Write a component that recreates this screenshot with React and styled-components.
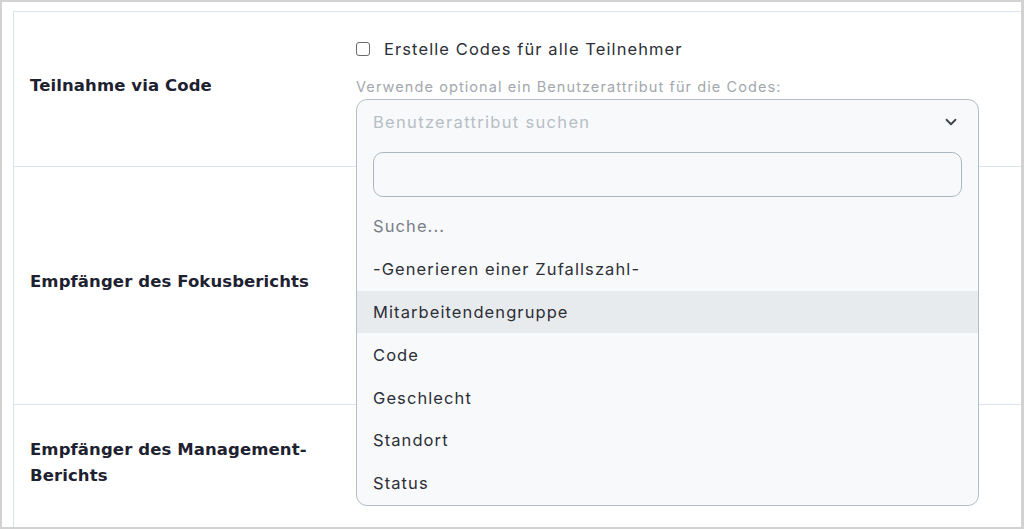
import React from 'react';
import styled, { createGlobalStyle } from 'styled-components';
import { ChevronDown } from 'lucide-react';

const GlobalStyle = createGlobalStyle`
  html, body {
    margin: 0;
    padding: 0;
    background: #ffffff;
  }
  body {
    font-family: Inter, "Noto Sans", sans-serif;
    letter-spacing: 0.068em;
    -webkit-font-smoothing: antialiased;
  }
`

const Frame = styled.div`
  box-sizing: border-box;
  width: 1024px;
  height: 529px;
  border: 2px solid #d2d2d2;
  border-right-width: 3px;
  padding: 9px 0 0 11px;
  overflow: hidden;
  background: #ffffff;
`

const Table = styled.div`
  border-top: 1px solid #dde3ea;
  border-left: 1px solid #dde3ea;
`

const Row = styled.div`
  display: grid;
  grid-template-columns: 342px 1fr;
  height: ${p => p.height}px;
  border-bottom: 1px solid #dde3ea;
`

const Label = styled.div`
  display: flex;
  align-items: center;
  padding: 0 26px 7px 16px;
  font-family: "DejaVu Sans", Inter, sans-serif;
  font-size: 16.5px;
  font-weight: 700;
  letter-spacing: 0.1px;
  line-height: 26px;
  color: #1d2130;
`

const Value = styled.div`
  padding: 25px 42px 0 0;
  display: flex;
  flex-direction: column;
`

const CheckLine = styled.label`
  display: flex;
  align-items: center;
  gap: 14px;
  height: 24px;
  font-size: 16.5px;
  color: #2c2f36;
`

const Box = styled.span`
  box-sizing: border-box;
  width: 14px;
  height: 14px;
  border: 1.5px solid #6b6b6b;
  border-radius: 3px;
  background: #ffffff;
`

const Hint = styled.div`
  margin-top: 16px;
  height: 20px;
  line-height: 20px;
  font-size: 14.5px;
  color: #a3a7ad;
`

const SelectWrap = styled.div`
  position: relative;
  margin-top: 2px;
  height: 44px;
`

const Menu = styled.div`
  position: absolute;
  top: 0;
  left: 0;
  right: 0;
  z-index: 5;
  border: 1px solid #b3bec8;
  border-radius: 11px;
  background: #f8f9fb;
  overflow: hidden;
`

const Control = styled.div`
  display: flex;
  align-items: center;
  justify-content: space-between;
  height: 44px;
  padding: 0 18px 0 16px;
  font-size: 16.5px;
  letter-spacing: 0.08em;
  color: #b6bec6;
`

const SearchBox = styled.div`
  box-sizing: border-box;
  margin: 8px 16px;
  height: 45px;
  border: 1.5px solid #aab6c0;
  border-radius: 10px;
  background: #f8f9fb;
`

const Option = styled.div`
  display: flex;
  align-items: center;
  height: 42.8px;
  padding-left: 16px;
  font-size: 16.5px;
  color: ${p => (p.muted ? '#7a7f86' : '#2c2f36')};
  background: ${p => (p.active ? '#e8ebee' : 'transparent')};
`

const options = [
  { text: 'Suche...', muted: true },
  { text: '-Generieren einer Zufallszahl-' },
  { text: 'Mitarbeitendengruppe', active: true },
  { text: 'Code' },
  { text: 'Geschlecht' },
  { text: 'Standort' },
  { text: 'Status' },
]

const App = () => (
  <>
    <GlobalStyle />
    <Frame>
      <Table>
        <Row height={154}>
          <Label>Teilnahme via Code</Label>
          <Value>
            <CheckLine>
              <Box />
              Erstelle Codes für alle Teilnehmer
            </CheckLine>
            <Hint>Verwende optional ein Benutzerattribut für die Codes:</Hint>
            <SelectWrap>
              <Menu>
                <Control>
                  Benutzerattribut suchen
                  <ChevronDown size={18} strokeWidth={2.4} color="#3d4148" />
                </Control>
                <SearchBox />
                {options.map(o => (
                  <Option key={o.text} muted={o.muted} active={o.active}>
                    {o.text}
                  </Option>
                ))}
              </Menu>
            </SelectWrap>
          </Value>
        </Row>
        <Row height={237}>
          <Label>Empfänger des Fokusberichts</Label>
          <Value />
        </Row>
        <Row height={122}>
          <Label>Empfänger des Management-Berichts</Label>
          <Value />
        </Row>
      </Table>
    </Frame>
  </>
);

export default App;
